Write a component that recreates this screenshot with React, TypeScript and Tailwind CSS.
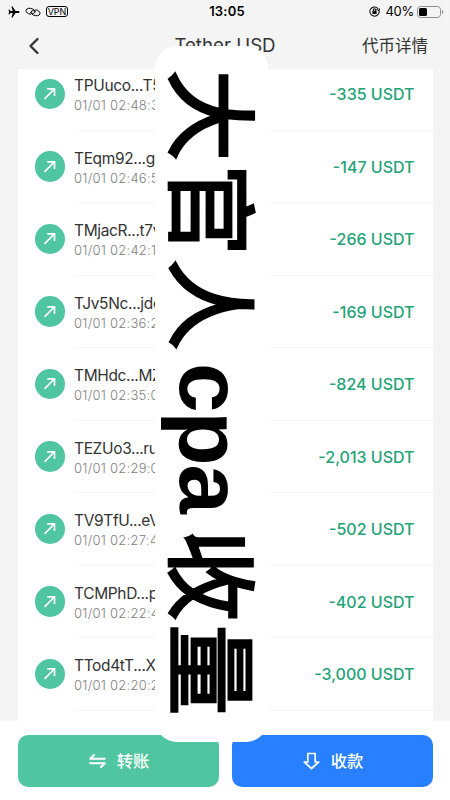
import { ChevronLeft } from 'lucide-react';

interface Transfer {
  address: string;
  time: string;
  amount: string;
}

const TRANSFERS: Transfer[] = [
  { address: 'TPUuco...T5', time: '01/01 02:48:3', amount: '-335 USDT' },
  { address: 'TEqm92...g', time: '01/01 02:46:5', amount: '-147 USDT' },
  { address: 'TMjacR...t7v', time: '01/01 02:42:1', amount: '-266 USDT' },
  { address: 'TJv5Nc...jde', time: '01/01 02:36:2', amount: '-169 USDT' },
  { address: 'TMHdc...MZ', time: '01/01 02:35:0', amount: '-824 USDT' },
  { address: 'TEZUo3...ru', time: '01/01 02:29:0', amount: '-2,013 USDT' },
  { address: 'TV9TfU...eV', time: '01/01 02:27:4', amount: '-502 USDT' },
  { address: 'TCMPhD...p', time: '01/01 02:22:4', amount: '-402 USDT' },
  { address: 'TTod4tT...X', time: '01/01 02:20:2', amount: '-3,000 USDT' },
];

function StatusBar() {
  return (
    <div className="grid h-[23px] grid-cols-3 items-center pr-1.5 pl-2 text-black">
      <div className="flex items-center gap-[5px]">
        <svg width="12" height="12" viewBox="0 0 24 24" fill="currentColor">
          <path d="M23 12c0-1.3-1-2-2.4-2h-5.4L9 1H6.600l3 9H5L2.800 7H1l1.200 5L1 17h1.800L5 14h4.600l-3 9H9l6.200-9h5.400c1.400 0 2.400-.7 2.400-2z" />
        </svg>
        <svg width="16" height="10" viewBox="0 0 16 10" fill="none" stroke="currentColor" strokeWidth="1" strokeLinecap="round">
          <path d="M5.500 7.200C3 7 .8 5.300 1 3.400c.3-2.200 3.800-2.700 6.500-1.500 2.200 1 3.200 2.800 2 4-.8.8-2.500.6-3.700-.2" />
          <path d="M10.500 2.800c2.500.2 4.700 1.900 4.500 3.800-.3 2.200-3.800 2.700-6.500 1.500-2.200-1-3.200-2.800-2-4 .8-.8 2.500-.6 3.700.2" />
        </svg>
        <span className="flex h-[11px] w-[22px] items-center justify-center rounded-[3px] border border-black text-[9px] leading-none">
          VPN
        </span>
      </div>
      <span className="pl-[2px] text-center text-[13px] font-semibold tracking-[0.200px]">13:05</span>
      <div className="flex items-center justify-end">
        <svg width="11" height="11" viewBox="0 0 12 12" fill="none" stroke="currentColor" strokeWidth="1.100">
          <path d="M9.800 2.800A5 5 0 1 0 10.900 5M8.300 3.600l2.500 1.300.9-2.300" />
          <rect x="3.700" y="5.300" width="4.600" height="3.400" fill="currentColor" stroke="none" />
          <path d="M4.700 5.400V4.300a1.300 1.300 0 0 1 2.600 0v1.100" />
        </svg>
        <span className="ml-[6px] text-[13px] tracking-[-0.300px]">40%</span>
        <svg className="ml-[3px]" width="27" height="12" viewBox="0 0 27 12">
          <rect x=".5" y=".5" width="23" height="11" rx="3" fill="none" stroke="#8e8e8e" />
          <rect x="2" y="2" width="8" height="8" rx="1.500" />
          <path d="M25 4c1.800.6 1.800 3.400 0 4z" fill="#8e8e8e" />
        </svg>
      </div>
    </div>
  );
}

function TransferRow({ address, time, amount }: Transfer) {
  return (
    <li className="flex h-[72.500px] shrink-0 pl-[17px]">
      <span className="mt-[20.500px] flex size-[30.500px] items-center justify-center rounded-full bg-[#50c6a0]">
        <svg width="13" height="13" viewBox="0 0 13 13" fill="none" stroke="white" strokeWidth="1.700">
          <path d="M1.500 11.800 11.300 2M4.200 1.800h7.300v7.300" />
        </svg>
      </span>
      <div className="ml-[9px] flex flex-1 items-start justify-between border-b border-[#f6f6f6] pr-[18px]">
        <div className="mt-[18px] whitespace-nowrap">
          <p className="text-[15.500px] leading-5 tracking-[-0.350px] text-[#333]">{address}</p>
          <p className="text-[13px] leading-[18px] font-light tracking-[0.250px] text-[#808080]">{time}</p>
        </div>
        <p className="mt-[26px] text-[16px] leading-5 font-[450] text-[#1fa377]">{amount}</p>
      </div>
    </li>
  );
}

export default function App() {
  return (
    <div className="relative flex h-[800px] w-[450px] flex-col overflow-hidden bg-[#f4f4f4] font-['Inter','Noto_Sans_CJK_SC',sans-serif]">
      <StatusBar />
      <header className="grid h-[46px] grid-cols-3 items-center pr-[22px] pl-[20px] text-[#333]">
        <ChevronLeft className="size-[28px]" strokeWidth={2} />
        <h1 className="pl-[2px] text-center text-[18.700px] whitespace-nowrap">Tether USD</h1>
        <button className="text-right text-[16.500px]">代币详情</button>
      </header>

      <main className="mx-[17.500px] flex h-[652px] flex-col justify-start overflow-hidden bg-white">
        <ul className="-mt-[11px] flex flex-col">
          {TRANSFERS.map((item) => (
            <TransferRow key={item.time} {...item} />
          ))}
        </ul>
      </main>

      <footer className="flex flex-1 items-start gap-[13px] bg-white px-[17.500px] pt-[14px] text-[16.300px] font-medium text-white">
        <button className="flex h-[52px] flex-1 items-center justify-center gap-[11px] rounded-[10px] bg-[#50c6a0] pl-[2px]">
          <svg width="17" height="16" viewBox="0 0 17 16" fill="none" stroke="currentColor" strokeWidth="2" strokeLinecap="round" strokeLinejoin="round">
            <path d="M5 2 1.200 5.800h14.600M12 14l3.800-3.800H1.200" />
          </svg>
          转账
        </button>
        <button className="flex h-[52px] flex-1 items-center justify-center gap-[11px] rounded-[10px] bg-[#287fff] pl-[2px]">
          <svg width="17" height="18" viewBox="0 0 17 18" fill="none" stroke="currentColor" strokeWidth="1.700" strokeLinejoin="round">
            <path d="M4.800 1.500h7.400v8.500h3.500l-7.200 6.500-7.200-6.500h3.500z" />
          </svg>
          收款
        </button>
      </footer>

      {/* sideways banner over the list */}
      <div className="absolute top-[46px] left-[155px] flex h-[696px] w-[113px] items-center rounded-[22px] bg-white pt-[23.500px] text-[91px] leading-[113px] tracking-[3.500px] whitespace-nowrap text-black [text-orientation:sideways] [writing-mode:vertical-rl]">
        <span className="relative left-[5px] font-['Noto_Sans_CJK_SC',sans-serif] [-webkit-text-stroke:2.800px_black]">大官人</span>
        <span className="relative -left-px mt-[10px] h-[167px] font-['Liberation_Sans',sans-serif] text-[89px] font-bold tracking-[-1.200px]">
          cpa
        </span>
        <span className="relative left-[5px] font-['Noto_Sans_CJK_SC',sans-serif] [-webkit-text-stroke:2.800px_black]">收量</span>
      </div>
    </div>
  );
}
